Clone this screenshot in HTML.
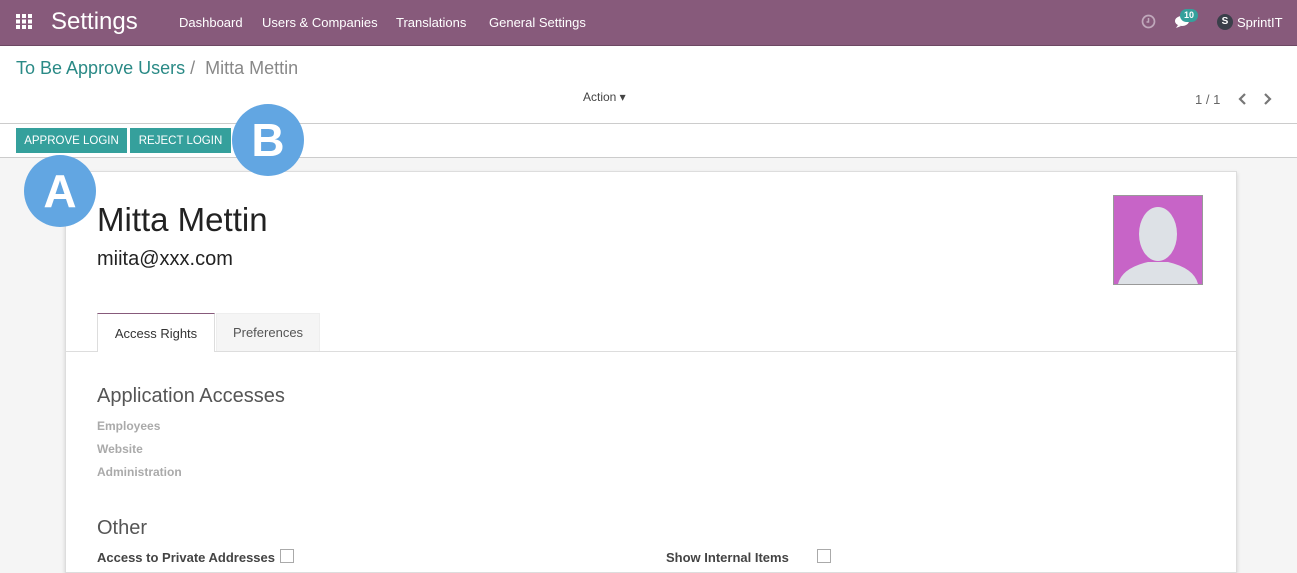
<!DOCTYPE html><html><head><style>
body{margin:0;width:1297px;height:552px;overflow:hidden;font-family:"Liberation Sans",sans-serif;background:#f5f5f5;position:relative}
.nav{position:absolute;left:0;top:0;width:1297px;height:45px;background:#875a7b;color:#fff;border-bottom:1px solid #6d4863}
.nav span{position:absolute;top:15px;font-size:13px}
.cp{position:absolute;left:0;top:46px;width:1297px;height:111px;background:#fff;border-bottom:1px solid #ccc}
.btn{position:absolute;top:128px;height:25px;background:#35a09c;color:#fff;font-size:11.5px;line-height:27px;text-align:center}
.circ{position:absolute;width:72px;height:72px;border-radius:50%;background:#62a6e2;color:#fff;font-weight:bold;font-size:46px;text-align:center;line-height:72px}
.sheet{position:absolute;left:65px;top:171px;width:1170px;height:400px;background:#fff;border:1px solid #ddd;box-shadow:0 2px 4px rgba(0,0,0,.15)}
.lbl{position:absolute;left:31px;font-size:12px;font-weight:bold;color:#aaa}
</style></head><body>
<div class="nav">
<svg style="position:absolute;left:16px;top:14px" width="17" height="15"><g fill="#fff"><rect x="0" y="0" width="4" height="4"/><rect x="6" y="0" width="4" height="4"/><rect x="12" y="0" width="4" height="4"/><rect x="0" y="5.5" width="4" height="4"/><rect x="6" y="5.5" width="4" height="4"/><rect x="12" y="5.5" width="4" height="4"/><rect x="0" y="11" width="4" height="4"/><rect x="6" y="11" width="4" height="4"/><rect x="12" y="11" width="4" height="4"/></g></svg>
<span style="left:51px;top:8px;font-size:24px">Settings</span>
<span style="left:179px">Dashboard</span><span style="left:262px">Users &amp; Companies</span><span style="left:396px">Translations</span><span style="left:489px">General Settings</span>
<svg style="position:absolute;left:1141px;top:14px" width="15" height="15"><circle cx="7.5" cy="7.5" r="6" fill="none" stroke="#c0a8bb" stroke-width="1.7"/><path d="M7.5 4v4h-2" stroke="#c0a8bb" stroke-width="1.5" fill="none"/></svg>
<svg style="position:absolute;left:1174px;top:15px" width="20" height="14"><ellipse cx="8" cy="6" rx="7" ry="5" fill="#fff"/><path d="M4 10l-2 3 5-2z" fill="#fff"/></svg>
<div style="position:absolute;left:1180px;top:9px;width:18px;height:13px;border-radius:7px;background:#35a09c;font-size:9px;text-align:center;line-height:13px;font-weight:bold">10</div>
<div style="position:absolute;left:1217px;top:14px;width:16px;height:16px;border-radius:50%;background:#3a3f4a;color:#fff;font-size:10px;text-align:center;line-height:16px;font-weight:bold">S</div>
<span style="left:1237px">SprintIT</span>
</div>
<div class="cp">
<div style="position:absolute;left:16px;top:12px;font-size:18px;color:#2a8a86">To Be Approve Users <span style="color:#888">/&nbsp; Mitta Mettin</span></div>
<div style="position:absolute;left:583px;top:44px;font-size:12px;color:#444">Action ▾</div>
<div style="position:absolute;left:1195px;top:46px;font-size:13px;color:#666">1 / 1</div>
<svg style="position:absolute;left:1236px;top:46px" width="40" height="14"><path d="M9 2L4 7l5 5M29 2l5 5-5 5" fill="none" stroke="#777" stroke-width="2.2"/></svg>
</div>
<div style="position:absolute;left:0;top:123px;width:1297px;border-top:1px solid #ccc"></div>
<div class="btn" style="left:16px;width:111px">APPROVE LOGIN</div>
<div class="btn" style="left:130px;width:101px">REJECT LOGIN</div>
<div class="sheet">
<div style="position:absolute;left:31px;top:29px;font-size:33px;color:#222">Mitta Mettin</div>
<div style="position:absolute;left:31px;top:76px;font-size:20px;color:#222">miita@xxx.com</div>
<div style="position:absolute;left:1047px;top:23px;width:88px;height:88px;background:#c764c7;border:1px solid #999;overflow:hidden">
<svg width="88" height="88"><ellipse cx="44" cy="38" rx="19" ry="27" fill="#dde1e6"/><path d="M4 88 Q8 72 34 66 L54 66 Q80 72 84 88Z" fill="#dde1e6"/></svg></div>
<div style="position:absolute;left:0;top:179px;width:1170px;border-top:1px solid #ddd"></div>
<div style="position:absolute;left:31px;top:141px;width:116px;height:38px;border:1px solid #ddd;border-top:1px solid #875a7b;border-bottom:none;background:#fff;font-size:13px;color:#333;text-align:center;line-height:40px">Access Rights</div>
<div style="position:absolute;left:150px;top:141px;width:102px;height:37px;background:#f5f5f5;border:1px solid #eee;border-bottom:none;font-size:13px;color:#555;text-align:center;line-height:37px">Preferences</div>
<div style="position:absolute;left:31px;top:213px;font-size:20px;color:#555">Application Accesses</div>
<div class="lbl" style="top:247px">Employees</div><div class="lbl" style="top:270px">Website</div><div class="lbl" style="top:293px">Administration</div>
<div style="position:absolute;left:31px;top:345px;font-size:20px;color:#555">Other</div>
<div style="position:absolute;left:31px;top:378px;font-size:13px;color:#444;font-weight:bold">Access to Private Addresses</div>
<div style="position:absolute;left:214px;top:377px;width:12px;height:12px;border:1px solid #aaa"></div>
<div style="position:absolute;left:600px;top:378px;font-size:13px;color:#444;font-weight:bold">Show Internal Items</div>
<div style="position:absolute;left:751px;top:377px;width:12px;height:12px;border:1px solid #aaa"></div>
</div>
<div class="circ" style="left:232px;top:104px">B</div>
<div class="circ" style="left:24px;top:155px">A</div>
</body></html>
